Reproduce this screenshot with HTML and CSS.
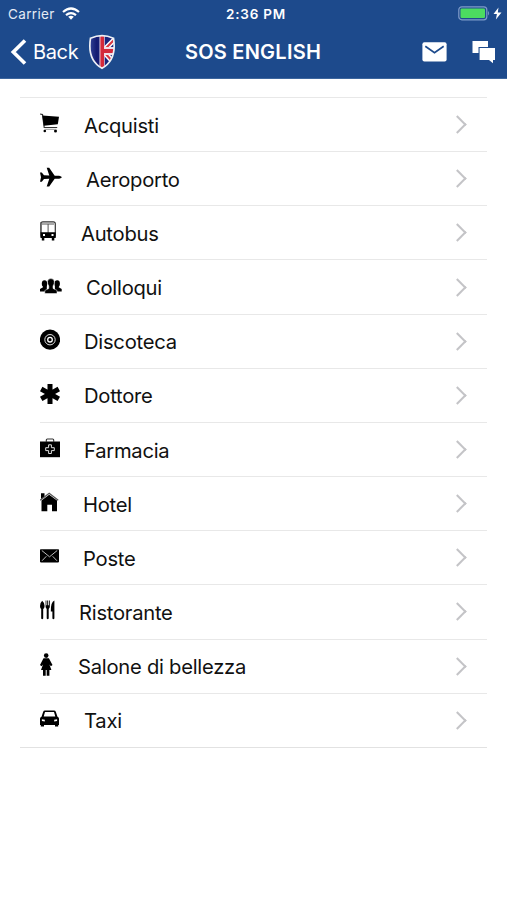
FILE: index.html
```html
<!DOCTYPE html>
<html lang="it">
<head>
<meta charset="utf-8">
<title>SOS English</title>
<link rel="stylesheet" href="styles.css">
</head>
<body>
<header class="header">
  <div class="status">
    <div class="carrier"><span>Carrier</span>
      <svg width="18" height="13" viewBox="0 0 18 13"><g fill="none" stroke="#fff" stroke-width="2.2"><path d="M1 5Q9-2 17 5"/><path d="M4 8.1Q9 4 14 8.1"/></g><path d="M6.2 9.8Q9 7.8 11.8 9.8L9 12.8Z" fill="#fff"/></svg>
    </div>
    <time class="clock">2:36 PM</time>
    <div class="power">
      <svg width="46" height="15" viewBox="0 0 46 15"><rect x=".8" y=".8" width="28" height="13" rx="3" fill="none" stroke="#7f9bc9" stroke-width="1.2"/><rect x="2.500" y="2.500" width="24.500" height="9.600" rx="1.300" fill="#4cdb60"/><path d="M30.100 5q2 2.200 0 4.600z" fill="#7f9bc9"/><path d="M40.500 1.500L35.500 8.100h3.400l-1 5.400L43.500 6.400H39.800z" fill="#fff"/></svg>
    </div>
  </div>
  <nav class="nav">
    <a class="back">
      <svg width="17" height="26" viewBox="0 0 17 26"><path d="M15 1.500L3.300 13 15 24.500" fill="none" stroke="#fff" stroke-width="3.600"/></svg>
      <span>Back</span>
      <svg class="shield" width="28" height="36" viewBox="0 0 28 36">
        <defs><clipPath id="crest"><path d="M14 1.700Q19.500 1.700 25.500 4.200Q29 26 14 34.200Q-1 26 2.500 4.200Q8.500 1.700 14 1.700Z"/></clipPath><linearGradient id="navy"><stop offset="0" stop-color="#3a4d9e"/><stop offset=".3" stop-color="#151d73"/><stop offset="1" stop-color="#202b83"/></linearGradient></defs>
        <g clip-path="url(#crest)"><path d="M0 0h28v36H0z" fill="url(#navy)"/><path d="M15 17L27 5M15 17l12 13" stroke="#fff" stroke-width="5"/><path d="M15 17L27 5M15 17l12 13" stroke="#d93742" stroke-width="2.200"/><path d="M11.500 0h5.200v36h-5.200zM14 13h14v8H14z" fill="#f0dfe8"/><path d="M12.400 0h3.600v36h-3.600zM14 15h14v4H14z" fill="#d4293a"/></g>
        <path d="M14 1.700Q19.500 1.700 25.500 4.200Q29 26 14 34.200Q-1 26 2.500 4.200Q8.500 1.700 14 1.700Z" fill="none" stroke="#eef0f5" stroke-width="1.700"/>
      </svg>
    </a>
    <h1 class="title">SOS ENGLISH</h1>
    <div class="actions">
      <svg width="25" height="20" viewBox="0 0 25 20"><rect x=".4" y=".3" width="24.200" height="19.200" rx="2" fill="#fff"/><path d="M3.300 4.300l9.200 6.500 9.200-6.500" fill="none" stroke="#1d4a8c" stroke-width="1.700"/></svg>
      <svg width="24" height="24" viewBox="0 0 24 24"><path d="M.5 1h15.500v6H6.500v6H3.300L.5 13Z" fill="#fff"/><path d="M7.600 8h15.400v12h-2v3.300L17 20H7.600z" fill="#fff"/></svg>
    </div>
  </nav>
</header>
<main>
<ul class="list">
  <li class="row"><svg class="icon" width="20" height="24" viewBox="0 0 20 24"><path d="M0 3l2.500.6 1.700 12.900h13" fill="none" stroke="#333" stroke-width="1.200"/><path d="M2.300 4.500L19 5.700l-1.200 7.600L3.800 14.800z"/><circle cx="4.800" cy="20" r="1.300"/><circle cx="15.500" cy="20" r="1.500"/><path d="M4.500 18.300h12" stroke="#999"/></svg><span class="label">Acquisti</span></li>
  <li class="row"><svg class="icon" width="22" height="24" viewBox="0 0 22 24"><path d="M0 7.500h1.800L4 10.300l5.300.3L6.700 2.800h2.500l5.500 7.900h4.500q2.600.6 2.600 1.500t-2.600 1.500h-4.500L9.200 21.500H6.700l2.600-7.800-5.300.3-2.200 2.800H0l1-4.600z"/></svg><span class="label">Aeroporto</span></li>
  <li class="row"><svg class="icon" width="17" height="24" viewBox="0 0 17 24"><rect x=".9" y="2.800" width="14.400" height="15.500" rx="2" fill="none" stroke="#333" stroke-width="1.200"/><path d="M2 5h12M8.100 5v9M1 3v11" fill="none" stroke="#555"/><path fill-rule="evenodd" d="M.5 13.200h15.200V19H.5zM3 15v2h2v-2zm8.500 0v2h2v-2zM1.800 19h2.500v2.500H1.800zm10 0h2.500v2.500h-2.500z"/></svg><span class="label">Autobus</span></li>
  <li class="row"><svg class="icon" width="22" height="24" viewBox="0 0 22 24"><ellipse cx="4.500" cy="9.700" rx="2.700" ry="3.400"/><ellipse cx="17.200" cy="9.700" rx="2.700" ry="3.400"/><path d="M0 17.500v-2.500l3-1.700V11h3.800v6.500zm21.700 0v-2.500l-3-1.700V11h-3.800v6.500z"/><path d="M4.800 19.500v-3l4-2V12Q7.300 10 7.500 7.600 7.800 4.600 10.900 4.600t3.400 3q.2 2.400-1.300 4.400v2.400l4 2v3.100z" stroke="#fff" stroke-width=".5"/></svg><span class="label">Colloqui</span></li>
  <li class="row"><svg class="icon" width="20" height="24" viewBox="0 0 20 24"><circle cx="10" cy="11.700" r="10.100"/><g fill="none" stroke="#ddd"><circle cx="10" cy="11.700" r="5.200"/><circle cx="10" cy="11.700" r="2.300" stroke="#fff" stroke-width="1.300"/></g></svg><span class="label">Discoteca</span></li>
  <li class="row"><svg class="icon" width="20" height="24" viewBox="0 0 20 24"><path d="M10 1.900v20M1.200 7l17.600 9.900M1.200 16.900L18.800 7" stroke="#000" stroke-width="5"/></svg><span class="label">Dottore</span></li>
  <li class="row"><svg class="icon" width="20" height="24" viewBox="0 0 20 24"><path d="M0 5.500h20v15.700H0z"/><path d="M6.300 6V4q0-1 1-1h5.400q1 0 1 1v2" fill="none" stroke="#333" stroke-width="1.100"/><path d="M8.600 8.800h2.800v2.900h2.900v2.900h-2.900v2.900H8.600v-2.900H5.700v-2.900h2.900z" fill="none" stroke="#ddd" stroke-width="1"/></svg><span class="label">Farmacia</span></li>
  <li class="row"><svg class="icon" width="19" height="24" viewBox="0 0 19 24"><path d="M1.500 10.500L9.200 4.800l7.800 5.700v10.700h-5v-6.500H7.300v6.500H1.500zM1 3.300h3.500v3.500L1 9z"/><path d="M.2 10.200l9-7 9 7" fill="none" stroke="#555" stroke-width="1.200"/></svg><span class="label">Hotel</span></li>
  <li class="row"><svg class="icon" width="19" height="24" viewBox="0 0 19 24"><rect y="5.200" width="19" height="13.200" rx=".8"/><path d="M1.800 6.500l7.700 6.300 7.700-6.300M2 16.800l4.300-4.500M17 16.800l-4.300-4.500" fill="none" stroke="#bbb" stroke-width="1"/></svg><span class="label">Poste</span></li>
  <li class="row"><svg class="icon" width="15" height="24" viewBox="0 0 15 24"><path d="M2.200 2.800Q4.600 4.800 4.600 8 4.500 10.300 3.200 11v9.600q-1 1.200-2 0V11Q0 10.300 0 8q0-3.200 2.200-5.200zM5.600 2.600h.8v4.600h.8V2.600h1v4.600H9V2.600h.8v6.600L8.700 11v9.600q-1 1.200-2 0V11L5.600 9.200zM14.400 2.600v18q-1 1.200-2 0v-7.200h-1.600Q10.700 4 14.400 2.600z"/></svg><span class="label">Ristorante</span></li>
  <li class="row"><svg class="icon" width="14" height="24" viewBox="0 0 14 24"><circle cx="6.200" cy="2.600" r="2.300"/><path d="M3.500 5.200h5.400L12.500 12l-1.600 1.300-1.500-1.800 2 5.500H9.400v5.700H6.700V17h-1v5.700H3V17H1l2-5.500-1.500 1.800L0 12z"/></svg><span class="label">Salone di bellezza</span></li>
  <li class="row"><svg class="icon" width="20" height="24" viewBox="0 0 20 24"><path fill-rule="evenodd" d="M1.500 9.800L3.200 4.800q.4-1.300 1.800-1.300h9q1.400 0 1.800 1.300l1.700 5q1.500.5 1.500 2v6.300h-.8v1.400h-3.200v-1.400H4v1.400H.8v-1.400H0v-6.300q0-1.500 1.500-2zm2.200-.2h11.600l-1.300-4.500H5zM1.900 12.200v1.700l2.900.6v-1.700zm15.200 0l-2.900.6v1.700l2.900-.6z"/></svg><span class="label">Taxi</span></li>
</ul>
</main>
</body>
</html>
```
FILE: styles.css
```css
* { box-sizing: border-box; }

body {
  margin: 0;
  background: #fff;
  color: #111;
  font-family: Inter, "Liberation Sans", sans-serif;
}

svg { display: block; flex: none; }

.header {
  height: 79px;
  background: #1d4a8c;
  border-bottom: 1px solid #3d669e;
  color: #fff;
}

.status {
  display: grid;
  grid-template-columns: 1fr auto 1fr;
  align-items: center;
  height: 27px;
  padding: 0 3px 0 8px;
}

.carrier {
  display: flex;
  align-items: center;
  gap: 7px;
  font-size: 13.5px;
  letter-spacing: .35px;
  color: #e4ebf5;
}

.clock {
  font-size: 13.5px;
  font-weight: 600;
  letter-spacing: .75px;
}

.power { justify-self: end; }

.nav {
  display: grid;
  grid-template-columns: 1fr auto 1fr;
  align-items: center;
  height: 50px;
  padding: 0 11px 0 10px;
}

.back {
  display: flex;
  align-items: center;
  font-size: 20px;
  letter-spacing: -.35px;
}

.back span { margin-left: 6px; }
.shield { margin-left: 10px; }

.title {
  margin: 0;
  font-size: 20px;
  font-weight: 600;
  letter-spacing: .25px;
}

.actions {
  display: flex;
  align-items: center;
  justify-content: flex-end;
  gap: 26px;
}

.actions svg:first-child { margin-right: -1px; }

.list {
  margin: 18px 20px 0;
  padding: 0;
  list-style: none;
  border-top: 1px solid #e8e8e8;
  border-bottom: 1px solid #e2e2e2;
}

.row {
  display: flex;
  align-items: center;
  gap: 24px;
  height: 54.17px;
  margin-left: 20px;
  padding-right: 20px;
  border-bottom: 1px solid #e8e8e8;
}

.row:last-child { border-bottom: 0; height: 53.17px; }

.row::after {
  content: "";
  width: 11px;
  height: 11px;
  margin-left: auto;
  margin-right: 3px;
  border: solid #c4c4c7;
  border-width: 2.5px 2.5px 0 0;
  transform: rotate(45deg);
}

.icon { margin-top: -3px; }

.label {
  padding-top: 1px;
  font-size: 20.2px;
  letter-spacing: -.25px;
}
```
